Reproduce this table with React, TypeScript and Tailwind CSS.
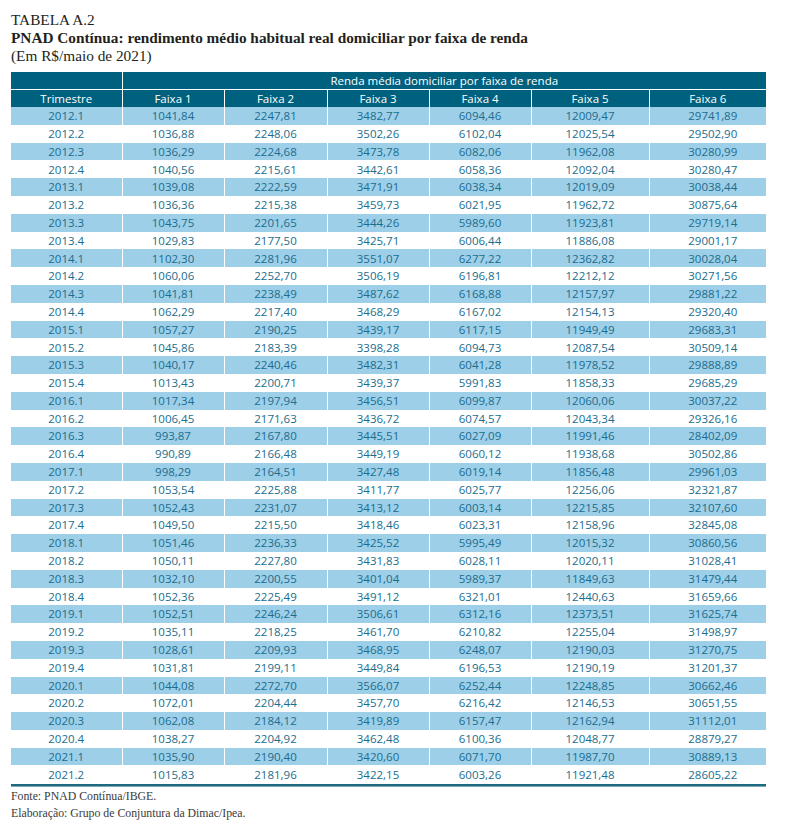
const rows: string[][] = [
  ["2012.1", "1041,84", "2247,81", "3482,77", "6094,46", "12009,47", "29741,89"],
  ["2012.2", "1036,88", "2248,06", "3502,26", "6102,04", "12025,54", "29502,90"],
  ["2012.3", "1036,29", "2224,68", "3473,78", "6082,06", "11962,08", "30280,99"],
  ["2012.4", "1040,56", "2215,61", "3442,61", "6058,36", "12092,04", "30280,47"],
  ["2013.1", "1039,08", "2222,59", "3471,91", "6038,34", "12019,09", "30038,44"],
  ["2013.2", "1036,36", "2215,38", "3459,73", "6021,95", "11962,72", "30875,64"],
  ["2013.3", "1043,75", "2201,65", "3444,26", "5989,60", "11923,81", "29719,14"],
  ["2013.4", "1029,83", "2177,50", "3425,71", "6006,44", "11886,08", "29001,17"],
  ["2014.1", "1102,30", "2281,96", "3551,07", "6277,22", "12362,82", "30028,04"],
  ["2014.2", "1060,06", "2252,70", "3506,19", "6196,81", "12212,12", "30271,56"],
  ["2014.3", "1041,81", "2238,49", "3487,62", "6168,88", "12157,97", "29881,22"],
  ["2014.4", "1062,29", "2217,40", "3468,29", "6167,02", "12154,13", "29320,40"],
  ["2015.1", "1057,27", "2190,25", "3439,17", "6117,15", "11949,49", "29683,31"],
  ["2015.2", "1045,86", "2183,39", "3398,28", "6094,73", "12087,54", "30509,14"],
  ["2015.3", "1040,17", "2240,46", "3482,31", "6041,28", "11978,52", "29888,89"],
  ["2015.4", "1013,43", "2200,71", "3439,37", "5991,83", "11858,33", "29685,29"],
  ["2016.1", "1017,34", "2197,94", "3456,51", "6099,87", "12060,06", "30037,22"],
  ["2016.2", "1006,45", "2171,63", "3436,72", "6074,57", "12043,34", "29326,16"],
  ["2016.3", "993,87", "2167,80", "3445,51", "6027,09", "11991,46", "28402,09"],
  ["2016.4", "990,89", "2166,48", "3449,19", "6060,12", "11938,68", "30502,86"],
  ["2017.1", "998,29", "2164,51", "3427,48", "6019,14", "11856,48", "29961,03"],
  ["2017.2", "1053,54", "2225,88", "3411,77", "6025,77", "12256,06", "32321,87"],
  ["2017.3", "1052,43", "2231,07", "3413,12", "6003,14", "12215,85", "32107,60"],
  ["2017.4", "1049,50", "2215,50", "3418,46", "6023,31", "12158,96", "32845,08"],
  ["2018.1", "1051,46", "2236,33", "3425,52", "5995,49", "12015,32", "30860,56"],
  ["2018.2", "1050,11", "2227,80", "3431,83", "6028,11", "12020,11", "31028,41"],
  ["2018.3", "1032,10", "2200,55", "3401,04", "5989,37", "11849,63", "31479,44"],
  ["2018.4", "1052,36", "2225,49", "3491,12", "6321,01", "12440,63", "31659,66"],
  ["2019.1", "1052,51", "2246,24", "3506,61", "6312,16", "12373,51", "31625,74"],
  ["2019.2", "1035,11", "2218,25", "3461,70", "6210,82", "12255,04", "31498,97"],
  ["2019.3", "1028,61", "2209,93", "3468,95", "6248,07", "12190,03", "31270,75"],
  ["2019.4", "1031,81", "2199,11", "3449,84", "6196,53", "12190,19", "31201,37"],
  ["2020.1", "1044,08", "2272,70", "3566,07", "6252,44", "12248,85", "30662,46"],
  ["2020.2", "1072,01", "2204,44", "3457,70", "6216,42", "12146,53", "30651,55"],
  ["2020.3", "1062,08", "2184,12", "3419,89", "6157,47", "12162,94", "31112,01"],
  ["2020.4", "1038,27", "2204,92", "3462,48", "6100,36", "12048,77", "28879,27"],
  ["2021.1", "1035,90", "2190,40", "3420,60", "6071,70", "11987,70", "30889,13"],
  ["2021.2", "1015,83", "2181,96", "3422,15", "6003,26", "11921,48", "28605,22"],
];

const widths = ["w-[111px]", "w-[102px]", "w-[103px]", "w-[102px]", "w-[102px]", "w-[118px]", "w-[117px]"];

export default function App() {
  return (
    <div className="min-h-screen bg-white pl-[11px] pt-[11px] font-['Liberation_Serif',serif] text-[#231f20]">
      <div className="text-[15.3px] leading-[18px]">TABELA A.2</div>
      <div className="text-[15.3px] leading-[18px] font-bold">
        PNAD Contínua: rendimento médio habitual real domiciliar por faixa de renda
      </div>
      <div className="text-[15.3px] leading-[18px]">(Em R$/maio de 2021)</div>

      <table className="mt-[7px] w-[755px] table-fixed border-collapse font-['Open_Sans',sans-serif] text-[11.5px]">
        <colgroup>
          {widths.map((w, i) => (
            <col key={i} className={w} />
          ))}
        </colgroup>
        <thead>
          <tr className="h-[17px] bg-[#00617f] text-white">
            <th className="border-r-[1.5px] border-white"></th>
            <th colSpan={6} className="font-normal leading-none">
              Renda média domiciliar por faixa de renda
            </th>
          </tr>
          <tr className="h-[18px] bg-[#00617f] text-white border-t-[1.5px] border-white">
            {["Trimestre", "Faixa 1", "Faixa 2", "Faixa 3", "Faixa 4", "Faixa 5", "Faixa 6"].map((h, i) => (
              <th key={h} className={`font-normal leading-none ${i < 6 ? "border-r-[1.5px] border-white" : ""}`}>
                {h}
              </th>
            ))}
          </tr>
        </thead>
        <tbody className="text-[#1a6d8d]">
          {rows.map((r, ri) => (
            <tr key={r[0]} className={`h-[17.8px] ${ri % 2 === 0 ? "bg-[#9ecfe9]" : "bg-white"}`}>
              {r.map((c, ci) => (
                <td
                  key={ci}
                  className={`text-center leading-none p-0 ${ci < 6 ? "border-r-[1.5px] border-white" : ""} ${ci === 6 ? "pl-[10px]" : ""}`}
                >
                  {c}
                </td>
              ))}
            </tr>
          ))}
        </tbody>
      </table>
      <div className="mt-[1px] h-[3px] w-[755px] border-t-2 border-[#1d6a80] bg-[#7fa9b5]"></div>

      <div className="mt-[1px] text-[11.8px] leading-[17px] text-[#3a3a3a]">
        <div>Fonte: PNAD Contínua/IBGE.</div>
        <div>Elaboração: Grupo de Conjuntura da Dimac/Ipea.</div>
      </div>
    </div>
  );
}
